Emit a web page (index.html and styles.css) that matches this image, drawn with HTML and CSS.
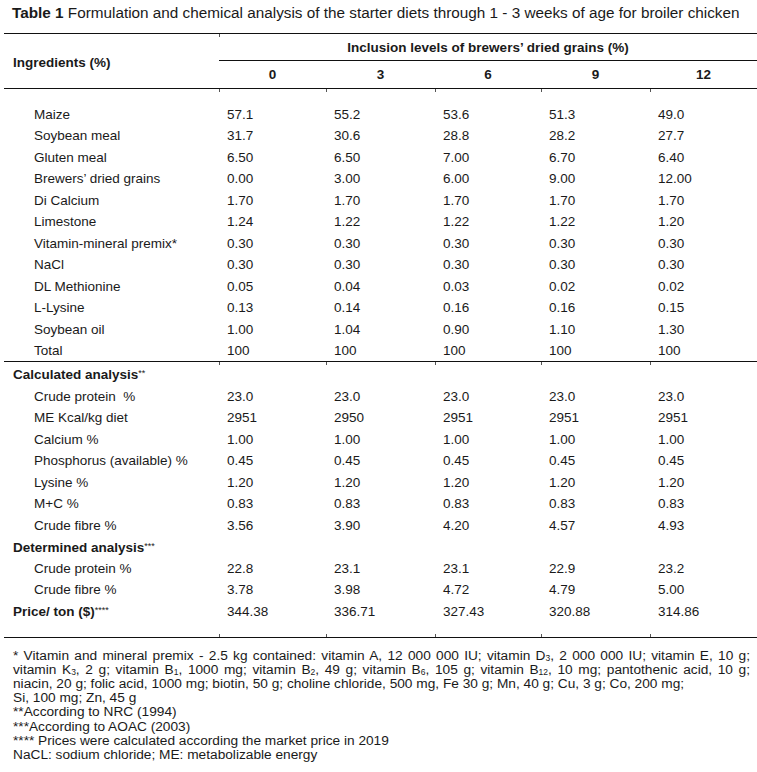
FILE: index.html
```html
<!DOCTYPE html>
<html>
<head>
<meta charset="utf-8">
<link rel="stylesheet" href="styles.css">
</head>
<body>
<div class="page">
  <p class="caption"><b>Table 1</b> Formulation and chemical analysis of the starter diets through 1 - 3 weeks of age for broiler chicken</p>
  <table class="diet">
    <colgroup>
      <col class="c-name"><col class="c-a"><col class="c-b"><col class="c-c"><col class="c-d"><col class="c-e">
    </colgroup>
    <thead>
      <tr class="h1">
        <th rowspan="2" class="name-h">Ingredients (%)</th>
        <th colspan="5" class="group-h">Inclusion levels of brewers’ dried grains (%)</th>
      </tr>
      <tr class="h2">
        <th>0</th><th>3</th><th>6</th><th>9</th><th>12</th>
      </tr>
    </thead>
    <tbody class="ingredients">
      <tr class="spacer"><td colspan="6" class="ticks-top"></td></tr>
      <tr><td class="ind">Maize</td><td>57.1</td><td>55.2</td><td>53.6</td><td>51.3</td><td>49.0</td></tr>
      <tr><td class="ind">Soybean meal</td><td>31.7</td><td>30.6</td><td>28.8</td><td>28.2</td><td>27.7</td></tr>
      <tr><td class="ind">Gluten meal</td><td>6.50</td><td>6.50</td><td>7.00</td><td>6.70</td><td>6.40</td></tr>
      <tr><td class="ind">Brewers’ dried grains</td><td>0.00</td><td>3.00</td><td>6.00</td><td>9.00</td><td>12.00</td></tr>
      <tr><td class="ind">Di Calcium</td><td>1.70</td><td>1.70</td><td>1.70</td><td>1.70</td><td>1.70</td></tr>
      <tr><td class="ind">Limestone</td><td>1.24</td><td>1.22</td><td>1.22</td><td>1.22</td><td>1.20</td></tr>
      <tr><td class="ind">Vitamin-mineral premix*</td><td>0.30</td><td>0.30</td><td>0.30</td><td>0.30</td><td>0.30</td></tr>
      <tr><td class="ind">NaCl</td><td>0.30</td><td>0.30</td><td>0.30</td><td>0.30</td><td>0.30</td></tr>
      <tr><td class="ind">DL Methionine</td><td>0.05</td><td>0.04</td><td>0.03</td><td>0.02</td><td>0.02</td></tr>
      <tr><td class="ind">L-Lysine</td><td>0.13</td><td>0.14</td><td>0.16</td><td>0.16</td><td>0.15</td></tr>
      <tr><td class="ind">Soybean oil</td><td>1.00</td><td>1.04</td><td>0.90</td><td>1.10</td><td>1.30</td></tr>
      <tr class="last"><td class="ind">Total</td><td>100</td><td>100</td><td>100</td><td>100</td><td>100</td></tr>
    </tbody>
    <tbody class="analysis">
      <tr class="first"><td class="sec ticks-top" colspan="6">Calculated analysis<span class="ast">**</span></td></tr>
      <tr><td class="ind">Crude protein &nbsp;%</td><td>23.0</td><td>23.0</td><td>23.0</td><td>23.0</td><td>23.0</td></tr>
      <tr><td class="ind">ME Kcal/kg diet</td><td>2951</td><td>2950</td><td>2951</td><td>2951</td><td>2951</td></tr>
      <tr><td class="ind">Calcium %</td><td>1.00</td><td>1.00</td><td>1.00</td><td>1.00</td><td>1.00</td></tr>
      <tr><td class="ind">Phosphorus (available) %</td><td>0.45</td><td>0.45</td><td>0.45</td><td>0.45</td><td>0.45</td></tr>
      <tr><td class="ind">Lysine %</td><td>1.20</td><td>1.20</td><td>1.20</td><td>1.20</td><td>1.20</td></tr>
      <tr><td class="ind">M+C %</td><td>0.83</td><td>0.83</td><td>0.83</td><td>0.83</td><td>0.83</td></tr>
      <tr><td class="ind">Crude fibre %</td><td>3.56</td><td>3.90</td><td>4.20</td><td>4.57</td><td>4.93</td></tr>
      <tr><td class="sec" colspan="6">Determined analysis<span class="ast">***</span></td></tr>
      <tr><td class="ind">Crude protein %</td><td>22.8</td><td>23.1</td><td>23.1</td><td>22.9</td><td>23.2</td></tr>
      <tr><td class="ind">Crude fibre %</td><td>3.78</td><td>3.98</td><td>4.72</td><td>4.79</td><td>5.00</td></tr>
      <tr><td class="sec">Price/ ton ($)<span class="ast">****</span></td><td>344.38</td><td>336.71</td><td>327.43</td><td>320.88</td><td>314.86</td></tr>
      <tr class="spacer2"><td colspan="6" class="ticks-bottom"></td></tr>
    </tbody>
  </table>
  <div class="notes">
    <p class="premix">* Vitamin and mineral premix - 2.5 kg contained: vitamin A, 12 000 000 IU; vitamin D<sub>3</sub>, 2 000 000 IU; vitamin E, 10 g; vitamin K<sub>3</sub>, 2 g; vitamin B<sub>1</sub>, 1000 mg; vitamin B<sub>2</sub>, 49 g; vitamin B<sub>6</sub>, 105 g; vitamin B<sub>12</sub>, 10 mg; pantothenic acid, 10 g; niacin, 20 g; folic acid, 1000 mg; biotin, 50 g; choline chloride, 500 mg, Fe 30 g; Mn, 40 g; Cu, 3 g; Co, 200 mg;<br>Si, 100 mg; Zn, 45 g</p>
    <p>**According to NRC (1994)</p>
    <p>***According to AOAC (2003)</p>
    <p>**** Prices were calculated according the market price in 2019</p>
    <p>NaCL: sodium chloride; ME: metabolizable energy</p>
  </div>
</div>
</body>
</html>
```

FILE: styles.css
```css
html, body {
  margin: 0;
  padding: 0;
  background: #ffffff;
}
body {
  font-family: "Liberation Sans", Arial, sans-serif;
  color: #1a1a1a;
  font-size: 13.5px;
}
.page {
  width: 757px;
  overflow: hidden;
}
.caption {
  margin: 0;
  padding: 4px 0 0 12px;
  height: 33px;
  box-sizing: border-box;
  line-height: 17px;
  font-size: 15.3px;
  white-space: nowrap;
}
.diet {
  margin-left: 4px;
  width: 753px;
  border-collapse: collapse;
  table-layout: fixed;
  border-top: 1px solid #111;
}
.c-name { width: 215px; }
.c-a { width: 107px; }
.c-b { width: 109px; }
.c-c { width: 106px; }
.c-d { width: 109px; }
.c-e { width: 107px; }
.diet th, .diet td {
  padding: 0;
  line-height: 15px;
}
.diet th {
  font-weight: bold;
}
.h1 { height: 27px; }
.h2 { height: 28px; }
.name-h {
  text-align: left;
  padding-left: 9px !important;
  padding-top: 2px !important;
  border-bottom: 1px solid #111;
}
.group-h {
  text-align: center;
  border-bottom: 1px solid #111;
  background: linear-gradient(#555, #555) 0 0 / 1px 3px no-repeat;
}
.h2 th {
  text-align: center;
  border-bottom: 1px solid #111;
}
.spacer { height: 15px; }
.ingredients tr:not(.spacer) { height: 21.5px; }
.ingredients tr.last td { border-bottom: 1px solid #111; }
.analysis tr { height: 21.5px; }
.analysis tr.first { height: 24px; }
.analysis tr.spacer2 { height: 15px; }
.analysis tr.spacer2 td { border-bottom: 1px solid #111; }
.diet td {
  padding-left: 8px;
  white-space: nowrap;
}
.diet td.ind { padding-left: 30px; }
.diet td.sec {
  padding-left: 9px;
  font-weight: bold;
}
.ticks-top,
.ticks-bottom {
  background-image:
    linear-gradient(#555, #555),
    linear-gradient(#555, #555),
    linear-gradient(#555, #555),
    linear-gradient(#555, #555),
    linear-gradient(#555, #555);
  background-size: 1px 3px;
  background-repeat: no-repeat;
}
.ticks-top {
  background-position: 215px 0, 322px 0, 431px 0, 537px 0, 646px 0;
}
.ticks-bottom {
  background-position: 215px 100%, 322px 100%, 431px 100%, 537px 100%, 646px 100%;
}
.ast {
  font-weight: normal;
  font-size: 9px;
  vertical-align: 3px;
}
.notes {
  padding: 11px 7px 0 13px;
  font-size: 13.7px;
  line-height: 14.2px;
}
.notes p {
  margin: 0;
}
.notes .premix {
  text-align: justify;
}
.notes sub {
  font-size: 8.5px;
  vertical-align: -1px;
  line-height: 0;
}
```
